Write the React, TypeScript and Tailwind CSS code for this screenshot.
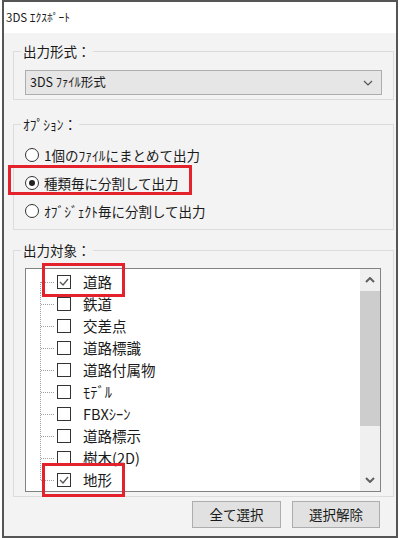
import type React from "react";
import type { ReactElement } from "react";

const items: { label: string; checked: boolean }[] = [
  { label: "道路", checked: true },
  { label: "鉄道", checked: false },
  { label: "交差点", checked: false },
  { label: "道路標識", checked: false },
  { label: "道路付属物", checked: false },
  { label: "ﾓﾃﾞﾙ", checked: false },
  { label: "FBXｼｰﾝ", checked: false },
  { label: "道路標示", checked: false },
  { label: "樹木(2D)", checked: false },
  { label: "地形", checked: true },
];

const radios: { label: string; selected: boolean }[] = [
  { label: "1個のﾌｧｲﾙにまとめて出力", selected: false },
  { label: "種類毎に分割して出力", selected: true },
  { label: "ｵﾌﾞｼﾞｪｸﾄ毎に分割して出力", selected: false },
];

const TreeLine = ({ first, last }: { first: boolean; last: boolean }): ReactElement => (
  <svg width="17" height="22" className="shrink-0">
    <line
      x1="0.5"
      x2="0.5"
      y1={first ? 11 : 0}
      y2={last ? 11 : 22}
      stroke="#a0a0a0"
      strokeDasharray="1 1"
    />
    <line x1="1" x2="15" y1="11.5" y2="11.5" stroke="#a0a0a0" strokeDasharray="1 1" />
  </svg>
);

const CheckBox = ({ checked }: { checked: boolean }): ReactElement => (
  <div className="w-[14px] h-[14px] border border-[#333] bg-white shrink-0 flex items-center justify-center">
    {checked && (
      <svg width="12" height="12" viewBox="0 0 12 12">
        <polyline points="2,6 5,9 10,3" fill="none" stroke="#555" strokeWidth="1.3" />
      </svg>
    )}
  </div>
);

const Radio = ({ selected }: { selected: boolean }): ReactElement => (
  <div className="w-[14px] h-[14px] rounded-full border border-[#333] bg-white shrink-0 flex items-center justify-center">
    {selected && <div className="w-[6px] h-[6px] rounded-full bg-[#222]" />}
  </div>
);

const App: React.FC = (): ReactElement => {
  return (
    <div className="relative w-[400px] h-[538px] bg-white font-['Noto_Sans_CJK_JP',sans-serif] text-[#1a1a1a]">
      <div className="ml-[2px] w-[396px] h-[538px] border-2 border-[#555] flex flex-col">
        {/* title bar */}
        <div className="h-[31px] bg-white flex items-center pl-[2px] text-[11.5px] leading-none">
          3DS ｴｸｽﾎﾟｰﾄ
        </div>

        <div className="flex-1 bg-[#f3f3f3] pt-[9px] pl-[9px] pr-[2px] flex flex-col">
          {/* 出力形式 */}
          <fieldset className="border border-[#dcdcdc] px-[11px] pb-[4px]">
            <legend className="ml-[-4px] px-[2px] text-[13.5px] leading-[18px]">出力形式：</legend>
            <div className="mt-[10px] h-[25px] bg-[#e6e6e6] border border-[#adadad] flex items-center justify-between pl-[4px] pr-[8px] text-[12.5px]">
              <span>3DS ﾌｧｲﾙ形式</span>
              <svg width="10" height="6" viewBox="0 0 10 6">
                <polyline points="1,1 5,5 9,1" fill="none" stroke="#555" strokeWidth="1.2" />
              </svg>
            </div>
          </fieldset>

          {/* オプション */}
          <fieldset className="mt-[15px] border border-[#dcdcdc] px-[11px] pb-[4px]">
            <legend className="ml-[-4px] px-[2px] text-[13.5px] leading-[18px]">ｵﾌﾟｼｮﾝ：</legend>
            <div className="mt-[8px] flex flex-col">
              {radios.map((r) => (
                <div key={r.label} className="h-[28px] flex items-center gap-[5px] text-[13.5px]">
                  <Radio selected={r.selected} />
                  <span>{r.label}</span>
                </div>
              ))}
            </div>
          </fieldset>

          {/* 出力対象 */}
          <fieldset className="mt-[11px] border border-[#dcdcdc] pl-[11px] pr-[12px] pb-[4px]">
            <legend className="ml-[-4px] px-[2px] text-[13.5px] leading-[18px]">出力対象：</legend>
            <div className="mt-[9px] h-[224px] bg-white border border-[#828282] flex">
              <div className="flex-1 pt-[2px] pl-[14px] flex flex-col">
                {items.map((it, i) => (
                  <div key={it.label} className="h-[22px] flex items-center text-[14.5px]">
                    <TreeLine first={i === 0} last={i === items.length - 1} />
                    <CheckBox checked={it.checked} />
                    <span className="ml-[12px]">{it.label}</span>
                  </div>
                ))}
              </div>
              <div className="w-[20px] bg-[#f0f0f0] flex flex-col">
                <div className="h-[22px] flex items-center justify-center">
                  <svg width="10" height="6" viewBox="0 0 10 6">
                    <polyline points="1,5 5,1 9,5" fill="none" stroke="#606060" strokeWidth="2" />
                  </svg>
                </div>
                <div className="h-[135px] bg-[#cdcdcd]" />
                <div className="flex-1" />
                <div className="h-[22px] flex items-center justify-center">
                  <svg width="10" height="6" viewBox="0 0 10 6">
                    <polyline points="1,1 5,5 9,1" fill="none" stroke="#606060" strokeWidth="2" />
                  </svg>
                </div>
              </div>
            </div>
          </fieldset>

          <div className="mt-[4px] mr-[14px] flex justify-end gap-[11px] text-[13.5px]">
            <button className="w-[89px] h-[27px] bg-[#e1e1e1] border border-[#adadad]">全て選択</button>
            <button className="w-[88px] h-[27px] bg-[#e1e1e1] border border-[#adadad]">選択解除</button>
          </div>
        </div>
      </div>

      {/* red annotation boxes */}
      <div className="absolute left-[8px] top-[165px] w-[184px] h-[30px] border-[3px] border-[#e3222b]" />
      <div className="absolute left-[42px] top-[263px] w-[83px] h-[34px] border-[3px] border-[#e3222b]" />
      <div className="absolute left-[42px] top-[463px] w-[83px] h-[34px] border-[3px] border-[#e3222b]" />
    </div>
  );
};

export default App;
